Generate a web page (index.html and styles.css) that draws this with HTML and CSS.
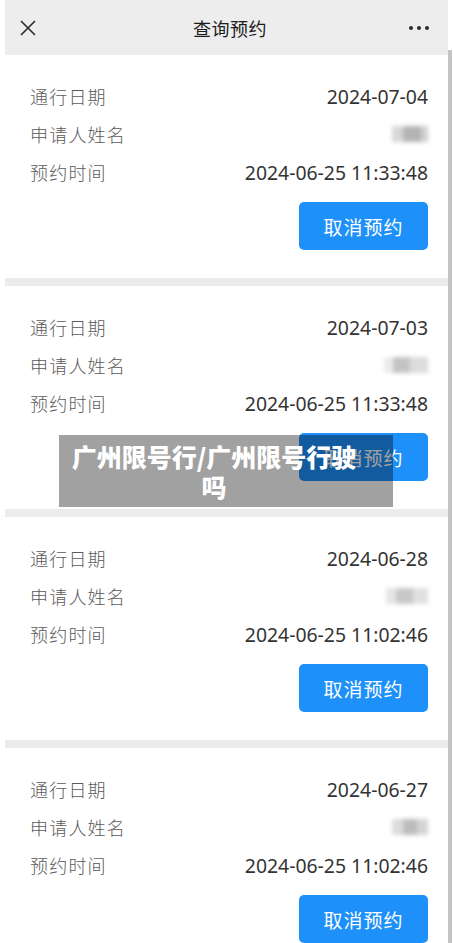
FILE: index.html
```html
<!DOCTYPE html>
<html lang="zh-CN">
<head>
<meta charset="utf-8">
<title>查询预约</title>
<link rel="stylesheet" href="styles.css">
</head>
<body>
<div class="page">
  <div class="main">
    <header class="topbar">
      <svg class="close" width="16" height="16" viewBox="0 0 16 16"><path d="M1 1L15 15M15 1L1 15" stroke="#2a2a2a" stroke-width="1.6" fill="none"/></svg>
      <div class="title">查询预约</div>
      <svg class="more" width="22" height="6" viewBox="0 0 22 6"><circle cx="3" cy="3" r="2" fill="#2a2a2a"/><circle cx="11" cy="3" r="2" fill="#2a2a2a"/><circle cx="19" cy="3" r="2" fill="#2a2a2a"/></svg>
    </header>

    <section class="card">
      <div class="row"><span class="label">通行日期</span><span class="value">2024-07-04</span></div>
      <div class="row"><span class="label">申请人姓名</span><span class="blur b1"></span></div>
      <div class="row"><span class="label">预约时间</span><span class="value">2024-06-25 11:33:48</span></div>
      <div class="actions"><button class="btn">取消预约</button></div>
    </section>
    <div class="band"></div>

    <section class="card">
      <div class="row"><span class="label">通行日期</span><span class="value">2024-07-03</span></div>
      <div class="row"><span class="label">申请人姓名</span><span class="blur b2"></span></div>
      <div class="row"><span class="label">预约时间</span><span class="value">2024-06-25 11:33:48</span></div>
      <div class="actions"><button class="btn">取消预约</button></div>
    </section>
    <div class="band"></div>

    <section class="card">
      <div class="row"><span class="label">通行日期</span><span class="value">2024-06-28</span></div>
      <div class="row"><span class="label">申请人姓名</span><span class="blur b3"></span></div>
      <div class="row"><span class="label">预约时间</span><span class="value">2024-06-25 11:02:46</span></div>
      <div class="actions"><button class="btn">取消预约</button></div>
    </section>
    <div class="band"></div>

    <section class="card">
      <div class="row"><span class="label">通行日期</span><span class="value">2024-06-27</span></div>
      <div class="row"><span class="label">申请人姓名</span><span class="blur b4"></span></div>
      <div class="row"><span class="label">预约时间</span><span class="value">2024-06-25 11:02:46</span></div>
      <div class="actions"><button class="btn">取消预约</button></div>
    </section>
  </div>
  <div class="scrollbar"></div>
</div>
<div class="overlay">广州限号行/广州限号行驶吗</div>
</body>
</html>
```

FILE: styles.css
```css
html, body {
  margin: 0;
  padding: 0;
  background: #ffffff;
  overflow: hidden;
}
body {
  font-family: "Noto Sans", "Noto Sans CJK SC", sans-serif;
}
.page {
  display: flex;
  padding-left: 5px;
  height: 943px;
}
.main {
  width: 443px;
}
.scrollbar {
  width: 4px;
  margin-top: 50px;
  background: #c4c4c4;
}
.topbar {
  height: 55px;
  background: #ededed;
  display: flex;
  align-items: center;
  justify-content: space-between;
  padding: 0 18px 0 15px;
}
.close {
  display: block;
}
.more {
  display: block;
}
.title {
  font-family: "Noto Sans CJK SC", sans-serif;
  font-size: 18px;
  color: #1c1c1c;
  letter-spacing: 0.5px;
  margin-left: 16px;
}
.card {
  padding: 22px 20px 28px 25px;
  background: #ffffff;
}
.row {
  height: 38px;
  display: flex;
  align-items: center;
  justify-content: space-between;
}
.label {
  font-family: "Noto Sans CJK SC", sans-serif;
  font-size: 18px;
  letter-spacing: 1.2px;
  color: #5a5a5a;
  font-weight: 300;
}
.value {
  font-family: "Noto Sans", sans-serif;
  font-size: 19.4px;
  color: #333333;
}
.blur {
  display: block;
  height: 16px;
  filter: blur(2px);
}
.b1 {
  width: 36px;
  background: linear-gradient(90deg, #d8d8d8 0 30%, #b4b4b4 30% 80%, #d0d0d0 80%);
}
.b2 {
  width: 44px;
  background: linear-gradient(90deg, #ececec 0 20%, #c4c4c4 20% 60%, #dcdcdc 60%);
}
.b3 {
  width: 42px;
  background: linear-gradient(90deg, #e6e6e6 0 25%, #c8c8c8 25% 65%, #e0e0e0 65%);
}
.b4 {
  width: 36px;
  background: linear-gradient(90deg, #dcdcdc 0 30%, #bcbcbc 30% 70%, #d4d4d4 70%);
}
.actions {
  display: flex;
  justify-content: flex-end;
  margin-top: 11px;
}
.btn {
  width: 129px;
  height: 48px;
  border: none;
  border-radius: 5px;
  background: #1e90fa;
  color: #ffffff;
  font-family: "Noto Sans CJK SC", sans-serif;
  font-size: 19px;
  letter-spacing: 1px;
  padding: 0;
}
.band {
  height: 8px;
  background: #ececec;
}
.overlay {
  position: absolute;
  left: 59px;
  top: 435px;
  width: 334px;
  box-sizing: border-box;
  padding: 6px 28px 6px 4px;
  background: rgba(0, 0, 0, 0.37);
  color: #ffffff;
  font-family: "Noto Sans CJK SC", sans-serif;
  font-weight: 900;
  font-size: 25px;
  line-height: 30px;
  text-align: center;
}
```
